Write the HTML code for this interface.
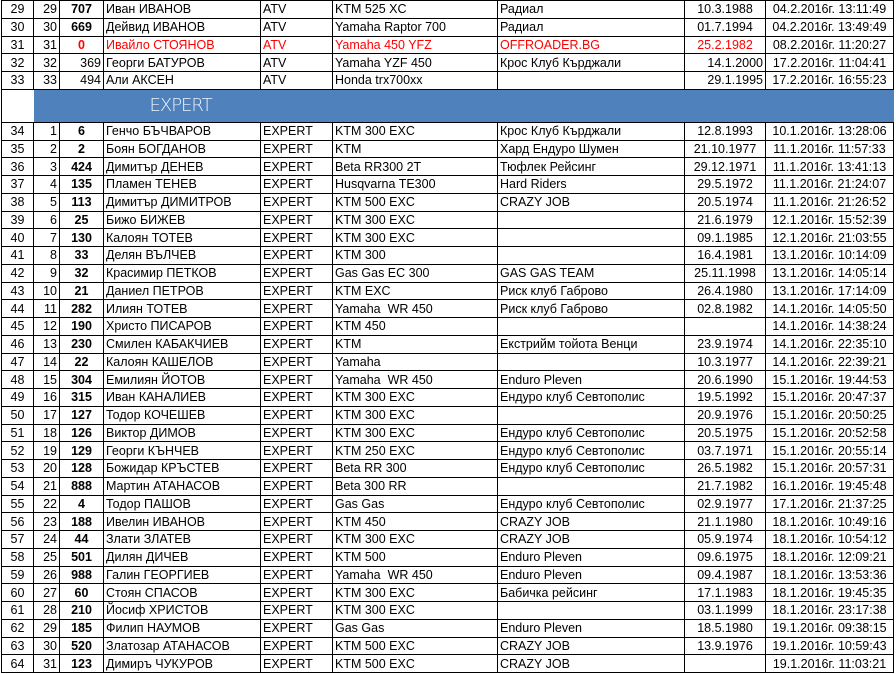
<!DOCTYPE html>
<html><head><meta charset="utf-8"><style>
html,body{margin:0;padding:0;background:#fff;width:896px;height:674px;overflow:hidden}
table{position:absolute;left:1px;top:0px;border-collapse:collapse;table-layout:fixed;font-family:"Liberation Sans","DejaVu Sans",sans-serif;font-size:12.5px;color:#000}
td{border:1px solid #000;height:16.75px;padding:0 2px;white-space:nowrap;overflow:hidden;line-height:16px}
td:nth-child(1){text-align:center}
td:nth-child(2){text-align:right}
td:nth-child(3){text-align:center;font-weight:bold}
td:nth-child(8){text-align:center}
td:nth-child(9){text-align:center}
.r{color:#f00}
.n{font-weight:normal!important;text-align:right!important}
.ra{text-align:right!important}
.band td{height:32px;border-left:none;border-right:none}
.band td.bl{background:#4f81bd;color:#eef3fa;font-family:"DejaVu Sans",sans-serif;font-size:18px;text-align:left;padding-left:116px;letter-spacing:-1px;font-weight:200}
</style></head><body>
<table>
<colgroup><col style="width:32px"><col style="width:26px"><col style="width:44px"><col style="width:157px"><col style="width:72px"><col style="width:165px"><col style="width:187px"><col style="width:81px"><col style="width:128px"></colgroup>
<tr><td>29</td><td>29</td><td>707</td><td>Иван ИВАНОВ</td><td>ATV</td><td>KTM 525 XC</td><td>Радиал</td><td>10.3.1988</td><td>04.2.2016г. 13:11:49</td></tr>
<tr><td>30</td><td>30</td><td>669</td><td>Дейвид ИВАНОВ</td><td>ATV</td><td>Yamaha Raptor 700</td><td>Радиал</td><td>01.7.1994</td><td>04.2.2016г. 13:49:49</td></tr>
<tr><td>31</td><td>31</td><td class="r">0</td><td class="r">Ивайло СТОЯНОВ</td><td class="r">ATV</td><td class="r">Yamaha 450 YFZ</td><td class="r">OFFROADER.BG</td><td class="r">25.2.1982</td><td>08.2.2016г. 11:20:27</td></tr>
<tr><td>32</td><td>32</td><td class="n">369</td><td>Георги БАТУРОВ</td><td>ATV</td><td>Yamaha YZF 450</td><td>Крос Клуб Кърджали</td><td class="ra">14.1.2000</td><td>17.2.2016г. 11:04:41</td></tr>
<tr><td>33</td><td>33</td><td class="n">494</td><td>Али АКСЕН</td><td>ATV</td><td>Honda trx700xx</td><td></td><td class="ra">29.1.1995</td><td>17.2.2016г. 16:55:23</td></tr>
<tr class="band"><td style="border-left:1px solid #000"></td><td class="bl" colspan="8">EXPERT</td></tr>
<tr><td>34</td><td>1</td><td>6</td><td>Генчо БЪЧВАРОВ</td><td>EXPERT</td><td>KTM 300 EXC</td><td>Крос Клуб Кърджали</td><td>12.8.1993</td><td>10.1.2016г. 13:28:06</td></tr>
<tr><td>35</td><td>2</td><td>2</td><td>Боян БОГДАНОВ</td><td>EXPERT</td><td>KTM</td><td>Хард Ендуро Шумен</td><td>21.10.1977</td><td>11.1.2016г. 11:57:33</td></tr>
<tr><td>36</td><td>3</td><td>424</td><td>Димитър ДЕНЕВ</td><td>EXPERT</td><td>Beta RR300 2T</td><td>Тюфлек Рейсинг</td><td>29.12.1971</td><td>11.1.2016г. 13:41:13</td></tr>
<tr><td>37</td><td>4</td><td>135</td><td>Пламен ТЕНЕВ</td><td>EXPERT</td><td>Husqvarna TE300</td><td>Hard Riders</td><td>29.5.1972</td><td>11.1.2016г. 21:24:07</td></tr>
<tr><td>38</td><td>5</td><td>113</td><td>Димитър ДИМИТРОВ</td><td>EXPERT</td><td>KTM 500 EXC</td><td>CRAZY JOB</td><td>20.5.1974</td><td>11.1.2016г. 21:26:52</td></tr>
<tr><td>39</td><td>6</td><td>25</td><td>Бижо БИЖЕВ</td><td>EXPERT</td><td>KTM 300 EXC</td><td></td><td>21.6.1979</td><td>12.1.2016г. 15:52:39</td></tr>
<tr><td>40</td><td>7</td><td>130</td><td>Калоян ТОТЕВ</td><td>EXPERT</td><td>KTM 300 EXC</td><td></td><td>09.1.1985</td><td>12.1.2016г. 21:03:55</td></tr>
<tr><td>41</td><td>8</td><td>33</td><td>Делян ВЪЛЧЕВ</td><td>EXPERT</td><td>KTM 300</td><td></td><td>16.4.1981</td><td>13.1.2016г. 10:14:09</td></tr>
<tr><td>42</td><td>9</td><td>32</td><td>Красимир ПЕТКОВ</td><td>EXPERT</td><td>Gas Gas EC 300</td><td>GAS GAS TEAM</td><td>25.11.1998</td><td>13.1.2016г. 14:05:14</td></tr>
<tr><td>43</td><td>10</td><td>21</td><td>Даниел ПЕТРОВ</td><td>EXPERT</td><td>KTM EXC</td><td>Риск клуб Габрово</td><td>26.4.1980</td><td>13.1.2016г. 17:14:09</td></tr>
<tr><td>44</td><td>11</td><td>282</td><td>Илиян ТОТЕВ</td><td>EXPERT</td><td>Yamaha&nbsp; WR 450</td><td>Риск клуб Габрово</td><td>02.8.1982</td><td>14.1.2016г. 14:05:50</td></tr>
<tr><td>45</td><td>12</td><td>190</td><td>Христо ПИСАРОВ</td><td>EXPERT</td><td>KTM 450</td><td></td><td></td><td>14.1.2016г. 14:38:24</td></tr>
<tr><td>46</td><td>13</td><td>230</td><td>Смилен КАБАКЧИЕВ</td><td>EXPERT</td><td>KTM</td><td>Екстрийм тойота Венци</td><td>23.9.1974</td><td>14.1.2016г. 22:35:10</td></tr>
<tr><td>47</td><td>14</td><td>22</td><td>Калоян КАШЕЛОВ</td><td>EXPERT</td><td>Yamaha</td><td></td><td>10.3.1977</td><td>14.1.2016г. 22:39:21</td></tr>
<tr><td>48</td><td>15</td><td>304</td><td>Емилиян ЙОТОВ</td><td>EXPERT</td><td>Yamaha&nbsp; WR 450</td><td>Enduro Pleven</td><td>20.6.1990</td><td>15.1.2016г. 19:44:53</td></tr>
<tr><td>49</td><td>16</td><td>315</td><td>Иван КАНАЛИЕВ</td><td>EXPERT</td><td>KTM 300 EXC</td><td>Ендуро клуб Севтополис</td><td>19.5.1992</td><td>15.1.2016г. 20:47:37</td></tr>
<tr><td>50</td><td>17</td><td>127</td><td>Тодор КОЧЕШЕВ</td><td>EXPERT</td><td>KTM 300 EXC</td><td></td><td>20.9.1976</td><td>15.1.2016г. 20:50:25</td></tr>
<tr><td>51</td><td>18</td><td>126</td><td>Виктор ДИМОВ</td><td>EXPERT</td><td>KTM 300 EXC</td><td>Ендуро клуб Севтополис</td><td>20.5.1975</td><td>15.1.2016г. 20:52:58</td></tr>
<tr><td>52</td><td>19</td><td>129</td><td>Георги КЪНЧЕВ</td><td>EXPERT</td><td>KTM 250 EXC</td><td>Ендуро клуб Севтополис</td><td>03.7.1971</td><td>15.1.2016г. 20:55:14</td></tr>
<tr><td>53</td><td>20</td><td>128</td><td>Божидар КРЪСТЕВ</td><td>EXPERT</td><td>Beta RR 300</td><td>Ендуро клуб Севтополис</td><td>26.5.1982</td><td>15.1.2016г. 20:57:31</td></tr>
<tr><td>54</td><td>21</td><td>888</td><td>Мартин АТАНАСОВ</td><td>EXPERT</td><td>Beta 300 RR</td><td></td><td>21.7.1982</td><td>16.1.2016г. 19:45:48</td></tr>
<tr><td>55</td><td>22</td><td>4</td><td>Тодор ПАШОВ</td><td>EXPERT</td><td>Gas Gas</td><td>Ендуро клуб Севтополис</td><td>02.9.1977</td><td>17.1.2016г. 21:37:25</td></tr>
<tr><td>56</td><td>23</td><td>188</td><td>Ивелин ИВАНОВ</td><td>EXPERT</td><td>KTM 450</td><td>CRAZY JOB</td><td>21.1.1980</td><td>18.1.2016г. 10:49:16</td></tr>
<tr><td>57</td><td>24</td><td>44</td><td>Злати ЗЛАТЕВ</td><td>EXPERT</td><td>KTM 300 EXC</td><td>CRAZY JOB</td><td>05.9.1974</td><td>18.1.2016г. 10:54:12</td></tr>
<tr><td>58</td><td>25</td><td>501</td><td>Дилян ДИЧЕВ</td><td>EXPERT</td><td>KTM 500</td><td>Enduro Pleven</td><td>09.6.1975</td><td>18.1.2016г. 12:09:21</td></tr>
<tr><td>59</td><td>26</td><td>988</td><td>Галин ГЕОРГИЕВ</td><td>EXPERT</td><td>Yamaha&nbsp; WR 450</td><td>Enduro Pleven</td><td>09.4.1987</td><td>18.1.2016г. 13:53:36</td></tr>
<tr><td>60</td><td>27</td><td>60</td><td>Стоян СПАСОВ</td><td>EXPERT</td><td>KTM 300 EXC</td><td>Бабичка рейсинг</td><td>17.1.1983</td><td>18.1.2016г. 19:45:35</td></tr>
<tr><td>61</td><td>28</td><td>210</td><td>Йосиф ХРИСТОВ</td><td>EXPERT</td><td>KTM 300 EXC</td><td></td><td>03.1.1999</td><td>18.1.2016г. 23:17:38</td></tr>
<tr><td>62</td><td>29</td><td>185</td><td>Филип НАУМОВ</td><td>EXPERT</td><td>Gas Gas</td><td>Enduro Pleven</td><td>18.5.1980</td><td>19.1.2016г. 09:38:15</td></tr>
<tr><td>63</td><td>30</td><td>520</td><td>Златозар АТАНАСОВ</td><td>EXPERT</td><td>KTM 500 EXC</td><td>CRAZY JOB</td><td>13.9.1976</td><td>19.1.2016г. 10:59:43</td></tr>
<tr><td>64</td><td>31</td><td>123</td><td>Димиръ ЧУКУРОВ</td><td>EXPERT</td><td>KTM 500 EXC</td><td>CRAZY JOB</td><td></td><td>19.1.2016г. 11:03:21</td></tr>
</table>
</body></html>
